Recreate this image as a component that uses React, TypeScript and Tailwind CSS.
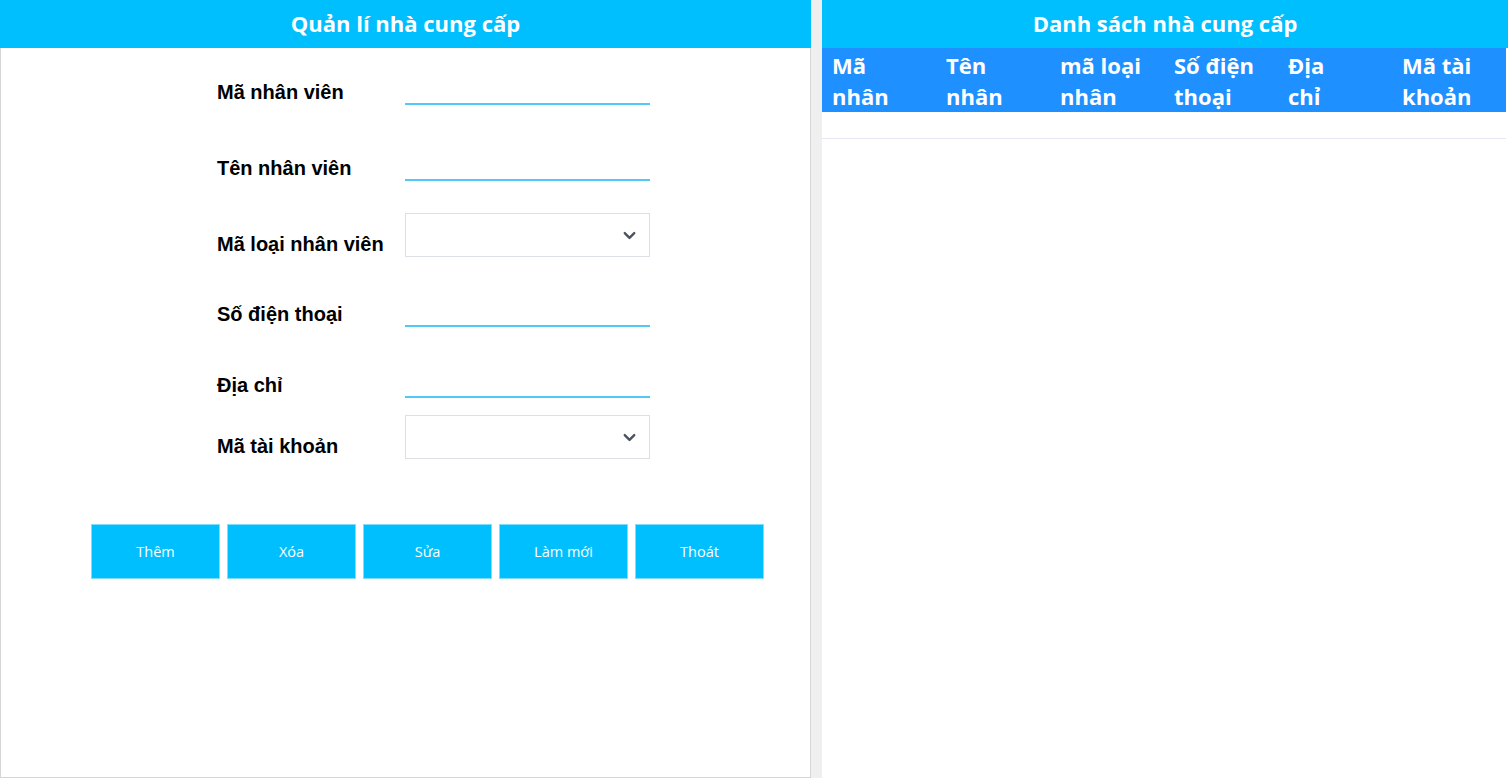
import React from 'react';
import { ChevronDown } from 'lucide-react';

const TextRow = ({ label, mt }: { label: string; mt: string }) => (
    <div className={`flex items-end ${mt}`}>
        <label className="w-[190px] mb-[2px] pl-[2px] text-[20px] leading-[22px] font-bold text-black font-['Liberation_Sans',Arial,sans-serif]">{label}</label>
        <input className="w-[245px] h-[32px] border-b-2 border-[#4fc9f5] outline-none bg-transparent" />
    </div>
);

const SelectRow = ({ label, mt }: { label: string; mt: string }) => (
    <div className={`flex items-end ${mt}`}>
        <label className="w-[190px] mb-[2px] pl-[2px] text-[20px] leading-[22px] font-bold text-black font-['Liberation_Sans',Arial,sans-serif]">{label}</label>
        <div className="w-[245px] h-[44px] border border-[#dcdfe4] bg-white flex items-center justify-end pr-[10px]">
            <ChevronDown size={19} strokeWidth={3} className="text-[#4a5160]" />
        </div>
    </div>
);

const buttons = ['Thêm', 'Xóa', 'Sửa', 'Làm mới', 'Thoát'];
const columns = [['Mã', 'nhân'], ['Tên', 'nhân'], ['mã loại', 'nhân'], ['Số điện', 'thoại'], ['Địa', 'chỉ'], ['Mã tài', 'khoản']];

export default function App() {
    return (
        <div className="flex w-[1508px] h-[778px] bg-[#efefef] font-['Open_Sans','Noto_Sans',sans-serif] overflow-hidden">
            {/* Form panel */}
            <div className="w-[811px] h-full bg-white border-x border-b border-[#d6d6d6] flex flex-col">
                <div className="h-12 bg-[#00bfff] flex items-center justify-center -mx-px pb-[2px]">
                    <h1 className="text-[22px] font-bold text-white">Quản lí nhà cung cấp</h1>
                </div>
                <div className="ml-[214px] flex flex-col">
                    <TextRow label="Mã nhân viên" mt="mt-[25px]" />
                    <TextRow label="Tên nhân viên" mt="mt-[44px]" />
                    <SelectRow label="Mã loại nhân viên" mt="mt-[32px]" />
                    <TextRow label="Số điện thoại" mt="mt-[38px]" />
                    <TextRow label="Địa chỉ" mt="mt-[39px]" />
                    <SelectRow label="Mã tài khoản" mt="mt-[17px]" />
                </div>
                <div className="flex gap-[7px] ml-[90px] mt-[65px]">
                    {buttons.map((b) => (
                        <button key={b} className="w-[129px] h-[55px] bg-[#00bfff] border border-[#7fdcfb] text-white text-[14.5px]">
                            {b}
                        </button>
                    ))}
                </div>
            </div>

            {/* List panel */}
            <div className="ml-[11px] flex-1 h-full bg-white flex flex-col">
                <div className="h-12 bg-[#00bfff] flex items-center justify-center pb-[2px]">
                    <h2 className="text-[22px] font-bold text-white">Danh sách nhà cung cấp</h2>
                </div>
                <div className="w-[684px] h-[64px] grid grid-cols-6 bg-[#1e90ff] pt-[2px]">
                    {columns.map((c) => (
                        <div key={c[0]} className="pl-[10px] text-[22px] leading-[31px] font-bold text-white">
                            <div>{c[0]}</div>
                            <div>{c[1]}</div>
                        </div>
                    ))}
                </div>
                <div className="w-[684px] h-[27px] border-b border-[#e6e6f4]" />
            </div>
        </div>
    );
}
